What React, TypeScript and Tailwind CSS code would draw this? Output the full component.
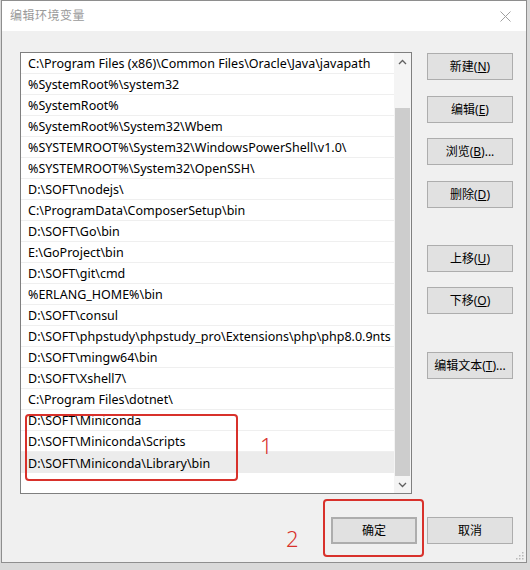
import { ReactNode } from 'react';

const paths = [
  'C:\\Program Files (x86)\\Common Files\\Oracle\\Java\\javapath',
  '%SystemRoot%\\system32',
  '%SystemRoot%',
  '%SystemRoot%\\System32\\Wbem',
  '%SYSTEMROOT%\\System32\\WindowsPowerShell\\v1.0\\',
  '%SYSTEMROOT%\\System32\\OpenSSH\\',
  'D:\\SOFT\\nodejs\\',
  'C:\\ProgramData\\ComposerSetup\\bin',
  'D:\\SOFT\\Go\\bin',
  'E:\\GoProject\\bin',
  'D:\\SOFT\\git\\cmd',
  '%ERLANG_HOME%\\bin',
  'D:\\SOFT\\consul',
  'D:\\SOFT\\phpstudy\\phpstudy_pro\\Extensions\\php\\php8.0.9nts',
  'D:\\SOFT\\mingw64\\bin',
  'D:\\SOFT\\Xshell7\\',
  'C:\\Program Files\\dotnet\\',
  'D:\\SOFT\\Miniconda',
  'D:\\SOFT\\Miniconda\\Scripts',
  'D:\\SOFT\\Miniconda\\Library\\bin',
];

const font = "font-['Noto_Sans','Noto_Sans_CJK_SC',sans-serif]";

function WinButton({ children, className = '' }: { children: ReactNode; className?: string }) {
  return (
    <div
      className={`w-[86px] h-[27px] flex items-center justify-center bg-[#e1e1e1] border border-[#adadad] text-[12px] text-black ${className}`}
    >
      {children}
    </div>
  );
}

export default function App() {
  return (
    <div className={`w-[530px] h-[570px] overflow-hidden bg-[#d9d9d9] pl-[1px] ${font}`}>
      <div className="relative w-[526px] h-[563px] border border-[#8e8e8e] bg-[#f0f0f0] flex flex-col">
        {/* title bar */}
        <div className="h-[30px] bg-white flex items-center justify-between pl-[8px] pr-[15px]">
          <span className="text-[12px] text-[#9a9a9a] tracking-[0.5px]">编辑环境变量</span>
          <svg width="11" height="11" viewBox="0 0 11 11">
            <path d="M0.5 0.5 L10.5 10.5 M10.5 0.5 L0.5 10.5" stroke="#a0a0a0" strokeWidth="1" />
          </svg>
        </div>

        {/* body */}
        <div className="flex-1 pl-[18px] pt-[21px] pr-[13px]">
          <div className="flex">
            <div className="w-[392px] h-[442px] border border-[#7f7f7f] bg-white flex">
              <div className="flex-1">
                {paths.map((path, i) => (
                  <div
                    key={path}
                    className={`h-[21px] pl-[7px] pt-[3px] flex items-center text-[12.5px] text-black whitespace-nowrap overflow-hidden ${
                      i === paths.length - 1 ? 'bg-[#ececec]' : 'border-b border-[#efefef]'
                    }`}
                  >
                    {path}
                  </div>
                ))}
              </div>
              <div className="w-[17px] flex flex-col bg-[#f4f4f4]">
                <div className="h-[17px] flex items-center justify-center">
                  <svg width="9" height="6" viewBox="0 0 9 6">
                    <path d="M1 5 L4.5 1.5 L8 5" stroke="#606060" strokeWidth="1.3" fill="none" />
                  </svg>
                </div>
                <div className="h-[38px]" />
                <div className="flex-1 mx-[1px] bg-[#cdcdcd]" />
                <div className="h-[17px] flex items-center justify-center">
                  <svg width="9" height="6" viewBox="0 0 9 6">
                    <path d="M1 1 L4.5 4.5 L8 1" stroke="#606060" strokeWidth="1.3" fill="none" />
                  </svg>
                </div>
              </div>
            </div>

            <div className="ml-[15px] pt-[1px] flex flex-col">
              <WinButton>
                新建(<u>N</u>)
              </WinButton>
              <WinButton className="mt-[16px]">
                编辑(<u>E</u>)
              </WinButton>
              <WinButton className="mt-[15px]">
                浏览(<u>B</u>)...
              </WinButton>
              <WinButton className="mt-[16px]">
                删除(<u>D</u>)
              </WinButton>
              <WinButton className="mt-[37px]">
                上移(<u>U</u>)
              </WinButton>
              <WinButton className="mt-[15px]">
                下移(<u>O</u>)
              </WinButton>
              <WinButton className="mt-[38px]">
                编辑文本(<u>T</u>)...
              </WinButton>
            </div>
          </div>

          <div className="mt-[23px] flex justify-end gap-[10px]">
            <WinButton className="border-2 border-[#0078d7]">确定</WinButton>
            <WinButton>取消</WinButton>
          </div>
        </div>

        {/* resize grip */}
        <svg className="absolute right-[2px] bottom-[2px]" width="9" height="9" viewBox="0 0 9 9">
          {[
            [7, 1],
            [4, 4],
            [7, 4],
            [1, 7],
            [4, 7],
            [7, 7],
          ].map(([x, y]) => (
            <rect key={`${x}-${y}`} x={x} y={y} width="1.5" height="1.5" fill="#b8b8b8" />
          ))}
        </svg>

        {/* red annotations */}
        <div className="absolute left-[23px] top-[413px] w-[213px] h-[67px] border-2 border-[#d8312b] rounded-[4px]" />
        <span className="absolute left-[258px] top-[433px] text-[22px] leading-none text-[#d8312b] font-light">1</span>
        <div className="absolute left-[321px] top-[498px] w-[101px] h-[58px] border-2 border-[#d8312b] rounded-[4px]" />
        <span className="absolute left-[284px] top-[526px] text-[22px] leading-none text-[#d8312b] font-light">2</span>
      </div>
    </div>
  );
}
